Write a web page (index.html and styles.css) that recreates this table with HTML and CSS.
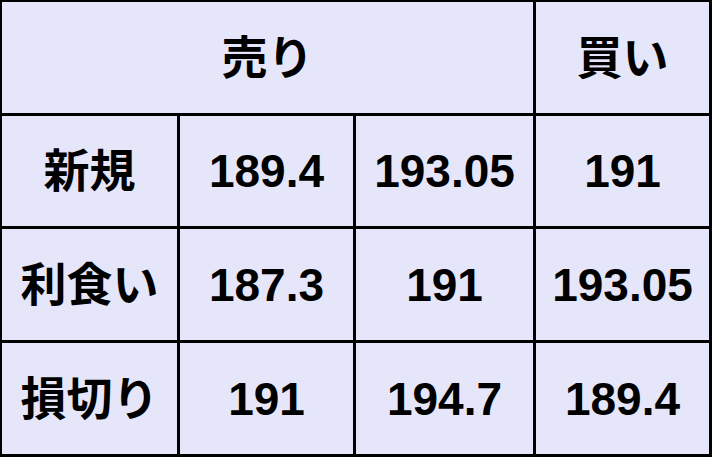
FILE: index.html
```html
<!DOCTYPE html>
<html lang="ja">
<head>
<meta charset="utf-8">
<title>売買表</title>
<link rel="stylesheet" href="styles.css">
</head>
<body>
<div class="grid">
  <div class="cell span3">売り</div>
  <div class="cell">買い</div>
  <div class="cell">新規</div>
  <div class="cell num">189.4</div>
  <div class="cell num">193.05</div>
  <div class="cell num">191</div>
  <div class="cell">利食い</div>
  <div class="cell num">187.3</div>
  <div class="cell num">191</div>
  <div class="cell num">193.05</div>
  <div class="cell">損切り</div>
  <div class="cell num">191</div>
  <div class="cell num">194.7</div>
  <div class="cell num">189.4</div>
</div>
</body>
</html>
```

FILE: styles.css
```css
html, body {
  margin: 0;
  padding: 0;
  background: #e6e6fa;
}
.grid {
  width: 712px;
  height: 457px;
  box-sizing: border-box;
  background: #000;
  padding: 2px 3px 3px 2px;
  display: grid;
  grid-template-columns: 175px 173px 177px 173px;
  grid-template-rows: 111px 110px 111px 111px;
  gap: 3px;
}
.cell {
  background: #e6e6fa;
  display: flex;
  align-items: center;
  justify-content: center;
  font-family: "Liberation Sans", "Noto Sans CJK JP", sans-serif;
  font-weight: bold;
  font-size: 46px;
  color: #000;
  line-height: 1;
}
.span3 {
  grid-column: span 3;
}
.num {
  font-size: 46px;
}
```
